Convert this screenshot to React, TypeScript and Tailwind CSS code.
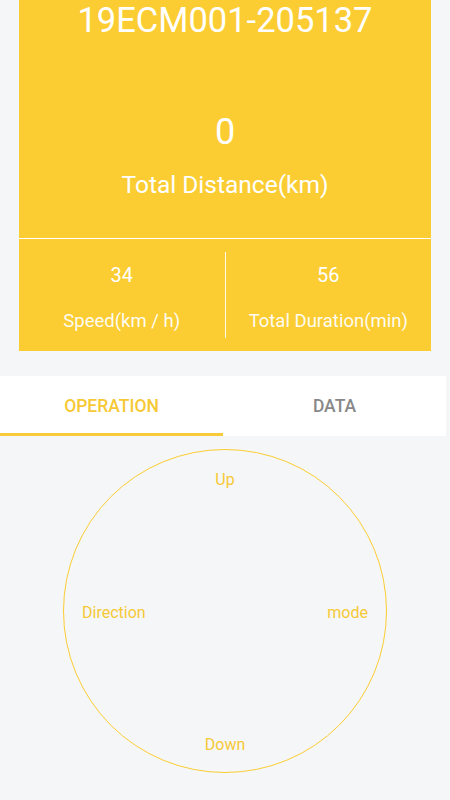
import { useState } from 'react'

const YELLOW = '#fbcd32'

function Stat({ value, label }: { value: string; label: string }) {
  return (
    <div className="flex flex-1 flex-col items-center pt-[24px]">
      <div className="text-[20px] leading-[24px] text-white">{value}</div>
      <div className="mt-[23px] text-[18.5px] leading-[22px] text-white/95">{label}</div>
    </div>
  )
}

export default function App() {
  const [tab, setTab] = useState<'op' | 'data'>('op')

  return (
    <div
      className="min-h-screen w-full bg-[#f5f6f8]"
      style={{ fontFamily: 'Roboto, "Noto Sans", sans-serif' }}
    >
      {/* summary card */}
      <div className="mx-[19px] flex h-[351px] flex-col bg-[#fbcd32]">
        <div className="flex h-[238px] flex-col items-center">
          <div className="text-[34.5px] leading-[40px] text-white">19ECM001-205137</div>
          <div className="mt-[72px] text-[36px] leading-[40px] text-white">0</div>
          <div className="mt-[18px] text-[24.5px] leading-[30px] text-white">Total Distance(km)</div>
        </div>
        <div className="h-px bg-white" />
        <div className="flex flex-1">
          <Stat value="34" label="Speed(km / h)" />
          <div className="mt-[13px] mb-[13px] w-px bg-white/90" />
          <Stat value="56" label="Total Duration(min)" />
        </div>
      </div>

      {/* tabs */}
      <div className="mt-[25px] flex h-[60px] w-[446px] bg-white">
        <button
          type="button"
          onClick={() => setTab('op')}
          className={`flex flex-1 items-center justify-center border-b-[3px] pt-[3px] text-[17.5px] font-medium ${
            tab === 'op' ? 'border-[#f8cb3a] text-[#f6c934]' : 'border-transparent text-[#888888]'
          }`}
        >
          OPERATION
        </button>
        <button
          type="button"
          onClick={() => setTab('data')}
          className={`flex flex-1 items-center justify-center border-b-[3px] pt-[3px] text-[17.5px] font-medium ${
            tab === 'data' ? 'border-[#f8cb3a] text-[#f6c934]' : 'border-transparent text-[#888888]'
          }`}
        >
          DATA
        </button>
      </div>

      {/* control wheel */}
      <div className="mt-[13px] flex justify-center">
        <div
          className="flex h-[324px] w-[324px] flex-col items-center justify-between rounded-full border-[1.5px] pt-[20px] pb-[17px] text-[16px] leading-[20px] text-[#f5c936]"
          style={{ borderColor: YELLOW }}
        >
          <span>Up</span>
          <div className="flex w-full justify-between px-[18px]">
            <span>Direction</span>
            <span>mode</span>
          </div>
          <span>Down</span>
        </div>
      </div>
    </div>
  )
}
